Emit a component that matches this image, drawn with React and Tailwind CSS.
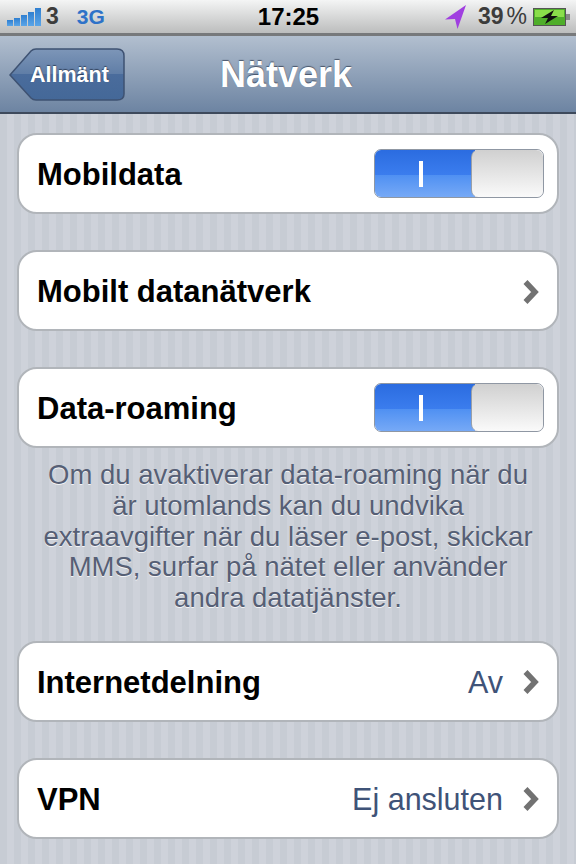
import React from 'react';

function Chevron() {
  return (
    <svg width="18" height="26" viewBox="0 0 18 26" className="mt-[2px] shrink-0">
      <path d="M3.5 3 L13 13 L3.5 23" fill="none" stroke="#727272" strokeWidth="5.5" />
    </svg>
  );
}

function Toggle() {
  return (
    <div className="relative flex h-[49px] w-[170px] overflow-hidden rounded-[7px] border border-[#8f97a3]">
      <div className="relative flex w-[100px] flex-col">
        <div className="h-[25px] bg-gradient-to-b from-[#2b6ce0] to-[#3b7dee]" />
        <div className="flex-1 bg-gradient-to-b from-[#4f90f2] to-[#76a9f6]" />
        <div className="absolute left-[44px] top-[11px] h-[26px] w-[4px] bg-white" />
      </div>
      <div className="z-10 -ml-[4px] flex-1 rounded-[7px] border-l border-[#9aa0a8] bg-gradient-to-b from-[#d0d0d0] to-[#fafafa]" />
    </div>
  );
}

function Row({ label, children }) {
  return (
    <div className="flex h-[81px] items-center justify-between rounded-[20px] border-2 border-[#b1b5ba] bg-white pl-[18px] pr-[13px]">
      <span className="pt-[4px] text-[31px] font-bold text-black">{label}</span>
      {children}
    </div>
  );
}

function Detail({ value }) {
  return (
    <div className="flex items-center gap-[19px] pr-[4px]">
      <span className="pt-[4px] text-[30.5px] text-[#3f5378]">{value}</span>
      <Chevron />
    </div>
  );
}

export default function App() {
  return (
    <div className="flex h-[864px] w-[576px] flex-col overflow-hidden font-['Liberation_Sans',Arial,sans-serif]">
      {/* status bar */}
      <div className="flex h-[36px] shrink-0 items-center justify-between border-b-[3px] border-[#77797b] bg-gradient-to-b from-[#f4f5f5] to-[#bcbdbd] pl-[7px] pr-[6px]">
        <div className="flex w-[200px] items-center">
          <div className="flex h-[18px] items-end gap-[1px]">
            <div className="h-[6px] w-[6px] bg-gradient-to-b from-[#2f7fd0] to-[#5aa5e8]" />
            <div className="h-[8px] w-[6px] bg-gradient-to-b from-[#2f7fd0] to-[#5aa5e8]" />
            <div className="h-[11px] w-[6px] bg-gradient-to-b from-[#2f7fd0] to-[#5aa5e8]" />
            <div className="h-[14px] w-[6px] bg-gradient-to-b from-[#2f7fd0] to-[#5aa5e8]" />
            <div className="h-[18px] w-[6px] bg-gradient-to-b from-[#2f7fd0] to-[#5aa5e8]" />
          </div>
          <span className="ml-[5px] text-[23px] font-bold leading-none text-[#3c3c3c]">3</span>
          <span className="ml-[18px] text-[21px] font-bold leading-none text-[#2e72c8]">3G</span>
        </div>
        <span className="text-[24px] font-bold leading-none text-black">17:25</span>
        <div className="flex w-[200px] items-center justify-end">
          <svg width="24" height="26" viewBox="0 0 24 26">
            <path d="M22 1 L1 15.5 L11 15 L13.5 25 Z" fill="#a03fe0" />
          </svg>
          <span className="ml-[10px] text-[23px] font-bold leading-none text-[#3c3c3c]">39</span>
          <span className="ml-[3px] text-[23px] leading-none text-[#3c3c3c]">%</span>
          <svg width="37" height="18" viewBox="0 0 37 18" className="ml-[6px]">
            <rect x="0.5" y="0.5" width="32" height="17" fill="#4fae2a" stroke="#555" />
            <rect x="2" y="2" width="29" height="7" fill="#8ade4a" />
            <rect x="33" y="6" width="4" height="6" fill="#888" />
            <path d="M21 2 L8 10 L15 10 L12 16 L25 8 L18 8 Z" fill="#111" />
          </svg>
        </div>
      </div>

      {/* nav bar */}
      <div className="relative flex h-[78px] shrink-0 items-center justify-center border-b-2 border-[#3e4a5c] bg-gradient-to-b from-[#b2bfcf] to-[#6d84a2] pr-[4px] pt-[2px]">
        <span className="text-[36px] font-bold text-white [text-shadow:0_-1px_1px_rgba(40,50,70,0.7)]">Nätverk</span>
        <div className="absolute left-[9px] top-[12px]">
          <svg width="116" height="54" viewBox="0 0 116 54" className="block">
            <defs>
              <linearGradient id="back" x1="0" y1="0" x2="0" y2="1">
                <stop offset="0" stopColor="#7d96b8" />
                <stop offset="0.5" stopColor="#5f7da6" />
                <stop offset="0.5" stopColor="#4a6c9c" />
                <stop offset="1" stopColor="#446898" />
              </linearGradient>
            </defs>
            <path d="M1 27 L22 3 Q24 1 27 1 L108 1 Q115 1 115 8 L115 46 Q115 52 108 52 L27 52 Q24 52 22 50 Z" fill="url(#back)" stroke="#3e5272" strokeWidth="1.5" />
          </svg>
          <span className="absolute left-[21px] top-[14px] text-[21.5px] font-bold leading-[26px] text-white [text-shadow:0_-1px_1px_rgba(30,40,60,0.7)]">Allmänt</span>
        </div>
      </div>

      {/* settings list */}
      <div className="flex-1 bg-[#c8cdd5] bg-[repeating-linear-gradient(90deg,#c7ccd4_0px,#c7ccd4_7px,#ced2da_7px,#ced2da_14px)] px-[17px] pt-[19px]">
        <Row label="Mobildata">
          <Toggle />
        </Row>
        <div className="mt-[36px]">
          <Row label="Mobilt datanätverk">
            <div className="pr-[4px]">
              <Chevron />
            </div>
          </Row>
        </div>
        <div className="mt-[36px]">
          <Row label="Data-roaming">
            <Toggle />
          </Row>
        </div>
        <p className="mt-[12px] text-center text-[27.5px] leading-[30.75px] text-[#565f75] [text-shadow:0_1px_0_rgba(255,255,255,0.8)]">
          Om du avaktiverar data-roaming när du
          <br />
          är utomlands kan du undvika
          <br />
          extraavgifter när du läser e-post, skickar
          <br />
          MMS, surfar på nätet eller använder
          <br />
          andra datatjänster.
        </p>
        <div className="mt-[27px]">
          <Row label="Internetdelning">
            <Detail value="Av" />
          </Row>
        </div>
        <div className="mt-[36px]">
          <Row label="VPN">
            <Detail value="Ej ansluten" />
          </Row>
        </div>
      </div>
    </div>
  );
}
